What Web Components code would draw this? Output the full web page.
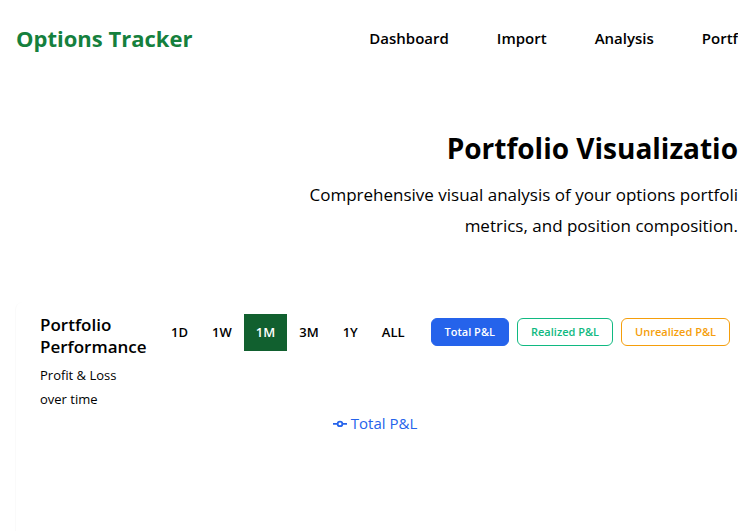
<!DOCTYPE html>
<html lang="en">
<head>
<meta charset="utf-8">
<title>Options Tracker</title>
<style>
  html { background: #fff; }
  body { margin: 0; min-height: 100vh; display: flex; flex-direction: column; color: #000; font-family: "Open Sans", "Noto Sans", sans-serif; }
  portfolio-card { flex: 1; }
</style>
</head>
<body>
<site-header>
  <nav-link href="#dashboard">Dashboard</nav-link>
  <nav-link href="#import">Import</nav-link>
  <nav-link href="#analysis">Analysis</nav-link>
  <nav-link href="#portfolio">Portf</nav-link>
</site-header>
<page-hero>
  <span slot="title">Portfolio Visualizatio</span>
  Comprehensive visual analysis of your options portfoli<br>metrics, and position composition.
</page-hero>
<portfolio-card>
  <span slot="title">Portfolio Performance</span>
  <span slot="subtitle">Profit &amp; Loss over time</span>
  <range-picker slot="ranges" values="1D,1W,1M,3M,1Y,ALL" selected="1M"></range-picker>
  <series-toggle slot="series" color="#2563eb" active>Total P&amp;L</series-toggle>
  <series-toggle slot="series" color="#10b981">Realized P&amp;L</series-toggle>
  <series-toggle slot="series" color="#f59e0b">Unrealized P&amp;L</series-toggle>
  <chart-legend slot="chart">Total P&amp;L</chart-legend>
</portfolio-card>

<script>
  class BaseElement extends HTMLElement {
    constructor() {
      super();
      this.attachShadow({ mode: "open" });
    }
    connectedCallback() {
      this.shadowRoot.innerHTML = this.render();
    }
  }

  customElements.define("nav-link", class extends BaseElement {
    render() {
      return `<style>
        :host { display: block; }
        a { display: block; color: inherit; text-decoration: none; font-size: 15px; font-weight: 600; line-height: 24px; white-space: nowrap; }
      </style><a href="${this.getAttribute("href")}"><slot></slot></a>`;
    }
  });

  customElements.define("site-header", class extends BaseElement {
    render() {
      return `<style>
        :host { display: block; }
        header { display: flex; align-items: center; justify-content: space-between; padding: 20px 0 20px 16px; }
        .brand { color: #15803d; text-decoration: none; font-size: 22px; font-weight: 700; line-height: 36px; white-space: nowrap; }
        nav { display: flex; gap: 48px; }
      </style>
      <header><a class="brand" href="#home">Options Tracker</a><nav><slot></slot></nav></header>`;
    }
  });

  customElements.define("page-hero", class extends BaseElement {
    render() {
      return `<style>
        :host { display: block; text-align: right; padding: 52px 0 61px; }
        h1 { margin: 0 0 11px; font-size: 28px; font-weight: 700; line-height: 40px; }
        p { margin: 0; font-size: 17px; line-height: 31px; }
      </style>
      <h1><slot name="title"></slot></h1><p><slot></slot></p>`;
    }
  });

  customElements.define("range-picker", class extends BaseElement {
    render() {
      const selected = this.getAttribute("selected");
      const buttons = this.getAttribute("values").split(",").map(v =>
        `<button type="button" aria-pressed="${v === selected}">${v}</button>`).join("");
      return `<style>
        :host { display: flex; }
        button { border: 0; margin: 0; padding: 8px 12px; background: none; color: inherit; font: 600 13px/21px "Open Sans", "Noto Sans", sans-serif; white-space: nowrap; }
        button[aria-pressed="true"] { background: #11602f; color: #fff; }
      </style>${buttons}`;
    }
  });

  customElements.define("series-toggle", class extends BaseElement {
    render() {
      const color = this.getAttribute("color");
      const active = this.hasAttribute("active");
      return `<style>
        :host { display: block; }
        button { display: block; margin: 0; padding: 4px 13px; border: 1px solid ${color}; border-radius: 6px; background: ${active ? color : "#fff"}; color: ${active ? "#fff" : color}; font: 600 11px/18px "Open Sans", "Noto Sans", sans-serif; white-space: nowrap; }
      </style><button type="button" aria-pressed="${active}"><slot></slot></button>`;
    }
  });

  customElements.define("chart-legend", class extends BaseElement {
    render() {
      return `<style>
        :host { display: flex; align-items: center; justify-content: center; gap: 4px; color: #2563eb; font-size: 15px; line-height: 24px; }
        svg { display: block; }
      </style>
      <svg width="14" height="14" viewBox="0 0 32 32" fill="none" stroke="currentColor" stroke-width="4" aria-hidden="true">
        <path d="M0 18h10.667a5.333 5.333 0 1 1 10.666 0H32M21.333 18a5.333 5.333 0 1 1-10.666 0"/>
      </svg>
      <span><slot></slot></span>`;
    }
  });

  customElements.define("portfolio-card", class extends BaseElement {
    render() {
      return `<style>
        :host { display: block; box-sizing: border-box; margin: 0 4px 0 15px; padding: 12px 0 24px 24px; border-left: 1px solid #fafafa; border-top-left-radius: 8px; }
        .head { display: flex; align-items: flex-start; margin-right: 4px; }
        .heading { flex: 1; min-width: 0; padding-right: 8px; }
        h2 { margin: 0 0 5px; font-size: 17px; font-weight: 600; line-height: 22px; }
        p { margin: 0; max-width: 100px; font-size: 13px; line-height: 24px; }
        .series { display: flex; gap: 8px; margin: 4px 0 0 14px; }
        .chart { padding-right: 24px; }
      </style>
      <section>
        <div class="head">
          <div class="heading">
            <h2><slot name="title"></slot></h2>
            <p><slot name="subtitle"></slot></p>
          </div>
          <slot name="ranges"></slot>
          <div class="series"><slot name="series"></slot></div>
        </div>
        <div class="chart"><slot name="chart"></slot></div>
      </section>`;
    }
  });
</script>
</body>
</html>
